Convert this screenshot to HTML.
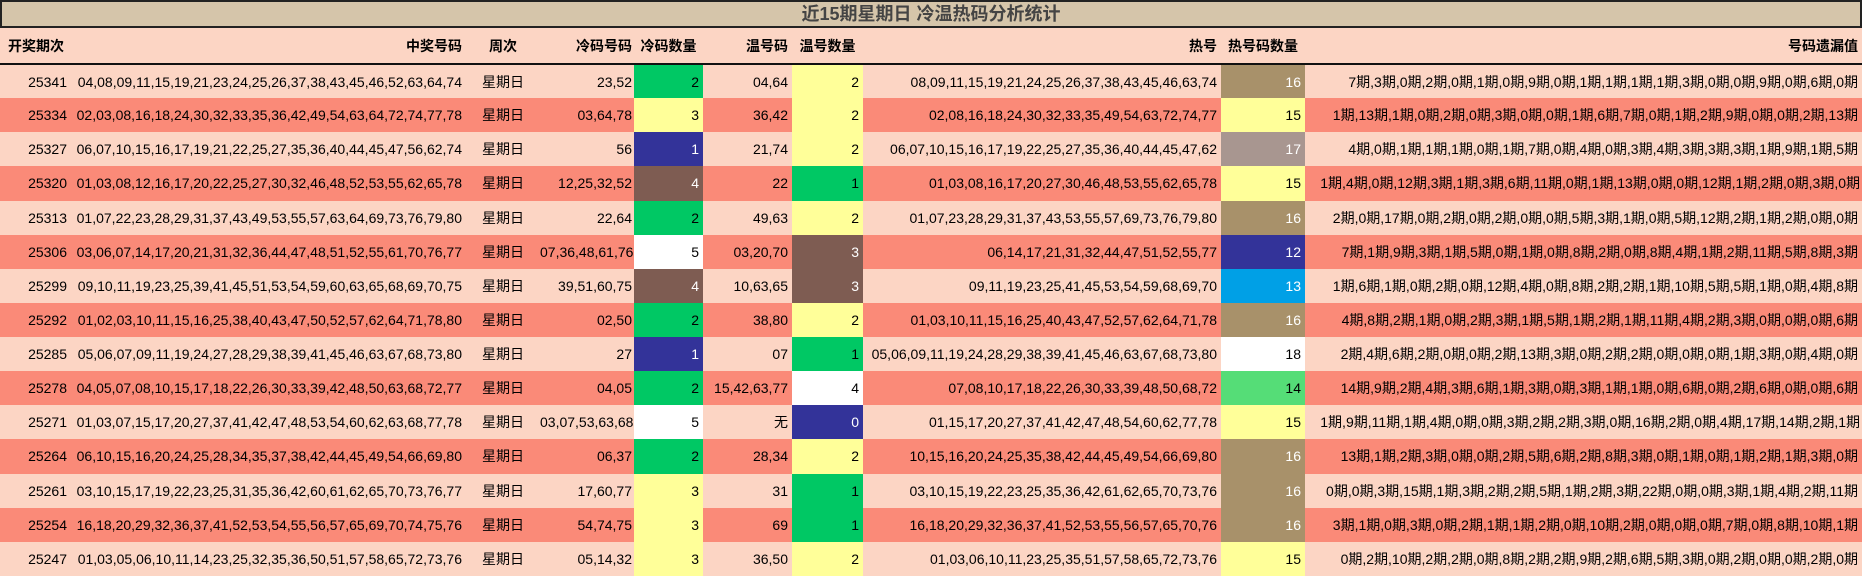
<!DOCTYPE html>
<html><head><meta charset="utf-8"><style>
html,body{margin:0;padding:0;background:#fcd5c4;}
body{width:1862px;height:576px;overflow:hidden;font-family:"Liberation Sans","Noto Sans CJK SC",sans-serif;font-size:14px;color:#000;}
.title{box-sizing:border-box;height:28px;background:#d5c5aa;border:2px solid #222;text-align:center;font-weight:bold;font-size:18px;line-height:24px;color:#444;}
table{border-collapse:collapse;table-layout:fixed;width:1862px;}
td{padding:0 4px;white-space:nowrap;overflow:hidden;text-align:right;height:34.13px;box-sizing:border-box;}
td:nth-child(4){padding:0 2px 0 0;overflow:visible;}
tr.h td{height:36px;font-weight:bold;border-bottom:2px solid #111;background:#fcd5c4;}
tr.l td{background:#fcd5c4}
tr.d td{background:#fa8a78}
td.c{text-align:center}
tr td.g{background:#00c864}
tr td.y{background:#ffff99}
tr td.n{background:#333399;color:#fff}
tr td.b{background:#7e5c52;color:#fff}
tr td.t{background:#a8916a;color:#fff}
tr td.m{background:#a89690;color:#fff}
tr td.bl{background:#00a0e6;color:#fff}
tr td.lg{background:#55dd77}
tr td.w{background:#fff}
</style></head><body>
<div class="title">近15期星期日 冷温热码分析统计</div>
<table>
<colgroup><col style="width:71px"><col style="width:395px"><col style="width:74px"><col style="width:94px"><col style="width:69px"><col style="width:89px"><col style="width:71px"><col style="width:358px"><col style="width:84px"><col style="width:557px"></colgroup>
<tr class="h"><td style="text-align:left;padding-left:8px">开奖期次</td><td>中奖号码</td><td class="c">周次</td><td>冷码号码</td><td class="c">冷码数量</td><td>温号码</td><td class="c">温号数量</td><td>热号</td><td class="c">热号码数量</td><td>号码遗漏值</td></tr>
<tr class="l"><td>25341</td><td>04,08,09,11,15,19,21,23,24,25,26,37,38,43,45,46,52,63,64,74</td><td class="c">星期日</td><td>23,52</td><td class="g">2</td><td>04,64</td><td class="y">2</td><td>08,09,11,15,19,21,24,25,26,37,38,43,45,46,63,74</td><td class="t">16</td><td>7期,3期,0期,2期,0期,1期,0期,9期,0期,1期,1期,1期,1期,3期,0期,0期,9期,0期,6期,0期</td></tr>
<tr class="d"><td>25334</td><td>02,03,08,16,18,24,30,32,33,35,36,42,49,54,63,64,72,74,77,78</td><td class="c">星期日</td><td>03,64,78</td><td class="y">3</td><td>36,42</td><td class="y">2</td><td>02,08,16,18,24,30,32,33,35,49,54,63,72,74,77</td><td class="y">15</td><td>1期,13期,1期,0期,2期,0期,3期,0期,0期,1期,6期,7期,0期,1期,2期,9期,0期,0期,2期,13期</td></tr>
<tr class="l"><td>25327</td><td>06,07,10,15,16,17,19,21,22,25,27,35,36,40,44,45,47,56,62,74</td><td class="c">星期日</td><td>56</td><td class="n">1</td><td>21,74</td><td class="y">2</td><td>06,07,10,15,16,17,19,22,25,27,35,36,40,44,45,47,62</td><td class="m">17</td><td>4期,0期,1期,1期,1期,0期,1期,7期,0期,4期,0期,3期,4期,3期,3期,3期,1期,9期,1期,5期</td></tr>
<tr class="d"><td>25320</td><td>01,03,08,12,16,17,20,22,25,27,30,32,46,48,52,53,55,62,65,78</td><td class="c">星期日</td><td>12,25,32,52</td><td class="b">4</td><td>22</td><td class="g">1</td><td>01,03,08,16,17,20,27,30,46,48,53,55,62,65,78</td><td class="y">15</td><td style="padding:0 2px">1期,4期,0期,12期,3期,1期,3期,6期,11期,0期,1期,13期,0期,0期,12期,1期,2期,0期,3期,0期</td></tr>
<tr class="l"><td>25313</td><td>01,07,22,23,28,29,31,37,43,49,53,55,57,63,64,69,73,76,79,80</td><td class="c">星期日</td><td>22,64</td><td class="g">2</td><td>49,63</td><td class="y">2</td><td>01,07,23,28,29,31,37,43,53,55,57,69,73,76,79,80</td><td class="t">16</td><td>2期,0期,17期,0期,2期,0期,2期,0期,0期,5期,3期,1期,0期,5期,12期,2期,1期,2期,0期,0期</td></tr>
<tr class="d"><td>25306</td><td>03,06,07,14,17,20,21,31,32,36,44,47,48,51,52,55,61,70,76,77</td><td class="c">星期日</td><td>07,36,48,61,76</td><td class="w">5</td><td>03,20,70</td><td class="b">3</td><td>06,14,17,21,31,32,44,47,51,52,55,77</td><td class="n">12</td><td>7期,1期,9期,3期,1期,5期,0期,1期,0期,8期,2期,0期,8期,4期,1期,2期,11期,5期,8期,3期</td></tr>
<tr class="l"><td>25299</td><td>09,10,11,19,23,25,39,41,45,51,53,54,59,60,63,65,68,69,70,75</td><td class="c">星期日</td><td>39,51,60,75</td><td class="b">4</td><td>10,63,65</td><td class="b">3</td><td>09,11,19,23,25,41,45,53,54,59,68,69,70</td><td class="bl">13</td><td>1期,6期,1期,0期,2期,0期,12期,4期,0期,8期,2期,2期,1期,10期,5期,5期,1期,0期,4期,8期</td></tr>
<tr class="d"><td>25292</td><td>01,02,03,10,11,15,16,25,38,40,43,47,50,52,57,62,64,71,78,80</td><td class="c">星期日</td><td>02,50</td><td class="g">2</td><td>38,80</td><td class="y">2</td><td>01,03,10,11,15,16,25,40,43,47,52,57,62,64,71,78</td><td class="t">16</td><td>4期,8期,2期,1期,0期,2期,3期,1期,5期,1期,2期,1期,11期,4期,2期,3期,0期,0期,0期,6期</td></tr>
<tr class="l"><td>25285</td><td>05,06,07,09,11,19,24,27,28,29,38,39,41,45,46,63,67,68,73,80</td><td class="c">星期日</td><td>27</td><td class="n">1</td><td>07</td><td class="g">1</td><td>05,06,09,11,19,24,28,29,38,39,41,45,46,63,67,68,73,80</td><td class="w">18</td><td>2期,4期,6期,2期,0期,0期,2期,13期,3期,0期,2期,2期,0期,0期,0期,1期,3期,0期,4期,0期</td></tr>
<tr class="d"><td>25278</td><td>04,05,07,08,10,15,17,18,22,26,30,33,39,42,48,50,63,68,72,77</td><td class="c">星期日</td><td>04,05</td><td class="g">2</td><td>15,42,63,77</td><td class="w">4</td><td>07,08,10,17,18,22,26,30,33,39,48,50,68,72</td><td class="lg">14</td><td>14期,9期,2期,4期,3期,6期,1期,3期,0期,3期,1期,1期,0期,6期,0期,2期,6期,0期,0期,6期</td></tr>
<tr class="l"><td>25271</td><td>01,03,07,15,17,20,27,37,41,42,47,48,53,54,60,62,63,68,77,78</td><td class="c">星期日</td><td>03,07,53,63,68</td><td class="w">5</td><td>无</td><td class="n">0</td><td>01,15,17,20,27,37,41,42,47,48,54,60,62,77,78</td><td class="y">15</td><td style="padding:0 2px">1期,9期,11期,1期,4期,0期,0期,3期,2期,2期,3期,0期,16期,2期,0期,4期,17期,14期,2期,1期</td></tr>
<tr class="d"><td>25264</td><td>06,10,15,16,20,24,25,28,34,35,37,38,42,44,45,49,54,66,69,80</td><td class="c">星期日</td><td>06,37</td><td class="g">2</td><td>28,34</td><td class="y">2</td><td>10,15,16,20,24,25,35,38,42,44,45,49,54,66,69,80</td><td class="t">16</td><td>13期,1期,2期,3期,0期,0期,2期,5期,6期,2期,8期,3期,0期,1期,0期,1期,2期,1期,3期,0期</td></tr>
<tr class="l"><td>25261</td><td>03,10,15,17,19,22,23,25,31,35,36,42,60,61,62,65,70,73,76,77</td><td class="c">星期日</td><td>17,60,77</td><td class="y">3</td><td>31</td><td class="g">1</td><td>03,10,15,19,22,23,25,35,36,42,61,62,65,70,73,76</td><td class="t">16</td><td>0期,0期,3期,15期,1期,3期,2期,2期,5期,1期,2期,3期,22期,0期,0期,3期,1期,4期,2期,11期</td></tr>
<tr class="d"><td>25254</td><td>16,18,20,29,32,36,37,41,52,53,54,55,56,57,65,69,70,74,75,76</td><td class="c">星期日</td><td>54,74,75</td><td class="y">3</td><td>69</td><td class="g">1</td><td>16,18,20,29,32,36,37,41,52,53,55,56,57,65,70,76</td><td class="t">16</td><td>3期,1期,0期,3期,0期,2期,1期,1期,2期,0期,10期,2期,0期,0期,0期,7期,0期,8期,10期,1期</td></tr>
<tr class="l"><td>25247</td><td>01,03,05,06,10,11,14,23,25,32,35,36,50,51,57,58,65,72,73,76</td><td class="c">星期日</td><td>05,14,32</td><td class="y">3</td><td>36,50</td><td class="y">2</td><td>01,03,06,10,11,23,25,35,51,57,58,65,72,73,76</td><td class="y">15</td><td>0期,2期,10期,2期,2期,0期,8期,2期,2期,9期,2期,6期,5期,3期,0期,2期,0期,0期,2期,0期</td></tr>
</table>
</body></html>
